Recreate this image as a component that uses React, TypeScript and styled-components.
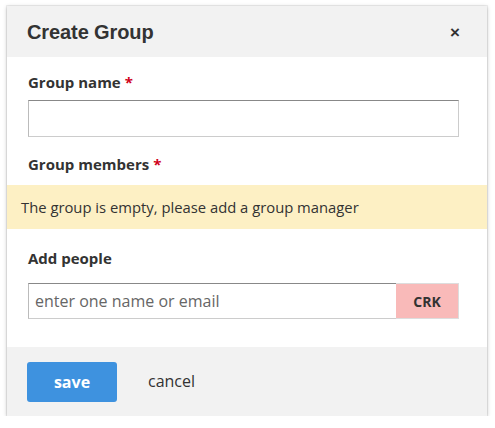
import React from "react";
import styled, { createGlobalStyle } from "styled-components";

const Global = createGlobalStyle`
  html, body { margin: 0; padding: 0; background: #ffffff; }
  body { font-family: "Open Sans", "Liberation Sans", sans-serif; color: #333; }
  * { box-sizing: border-box; }
`;

const Dialog = styled.div`
  margin: 6px 0 0 7px;
  width: 480px;
  background: #fff;
  box-shadow: 0 0 0 1px rgba(0, 0, 0, 0.06), 0 1px 4px rgba(0, 0, 0, 0.25);
  display: flex;
  flex-direction: column;
`;

const Header = styled.div`
  height: 51px;
  background: #f2f2f2;
  display: flex;
  align-items: center;
  justify-content: space-between;
  padding: 2px 27px 0 20px;
`;

const Title = styled.h2`
  margin: 0;
  font-family: "Liberation Sans", Arial, sans-serif;
  font-weight: 700;
  font-size: 20px;
  color: #333;
  letter-spacing: -0.1px;
`;

const Close = styled.button`
  border: 0;
  background: none;
  padding: 0;
  font-family: "Liberation Sans", Arial, sans-serif;
  font-weight: 700;
  font-size: 17px;
  line-height: 1;
  color: #333;
  cursor: pointer;
`;

const Body = styled.div`
  padding: 15px 0 28px;
  display: flex;
  flex-direction: column;
`;

const Section = styled.div<{ $top?: number }>`
  padding: 0 28px 0 21px;
  margin-top: ${(p) => p.$top ?? 0}px;
  display: flex;
  flex-direction: column;
`;

const Label = styled.label<{ $gap: number }>`
  font-weight: 700;
  font-size: 15px;
  line-height: 20px;
  color: #333;
  margin-bottom: ${(p) => p.$gap}px;
`;

const Req = styled.span`
  color: #d0021b;
  margin-left: 4px;
`;

const TextInput = styled.input`
  height: 37px;
  width: 100%;
  border: 1px solid #ccc;
  border-top-color: #888;
  border-left-color: #bbb;
  background: #fff;
  font-family: "Open Sans", sans-serif;
  font-size: 15px;
  padding: 0 6px;
  outline: none;
`;

const Alert = styled.div`
  margin-top: 11px;
  height: 44px;
  background: #fdf0c4;
  display: flex;
  align-items: center;
  padding: 0 14px;
  font-size: 14.8px;
  color: #333;
`;

const Row = styled.div`
  display: flex;
  height: 36px;
`;

const PeopleInput = styled.input`
  flex: 1;
  min-width: 0;
  border: 1px solid #ccc;
  border-right: 0;
  border-top-color: #888;
  border-left-color: #bbb;
  font-family: "Open Sans", sans-serif;
  font-size: 16px;
  padding: 0 6px;
  color: #333;
  outline: none;
  &::placeholder { color: #666; }
`;

const Tag = styled.button`
  width: 63px;
  border: 1px solid #ddd;
  border-left: 0;
  background: #f9bab9;
  font-family: "Open Sans", sans-serif;
  font-weight: 700;
  font-size: 14px;
  color: #333;
  padding: 0;
`;

const Footer = styled.div`
  background: #f2f2f2;
  height: 69px;
  padding: 15px 20px 0;
  display: flex;
  align-items: flex-start;
  gap: 31px;
`;

const Save = styled.button`
  width: 90px;
  height: 40px;
  border: 0;
  border-radius: 3px;
  background: #3e92df;
  color: #fff;
  font-family: "Open Sans", sans-serif;
  font-weight: 700;
  font-size: 16px;
  padding: 0;
`;

const Cancel = styled.button`
  border: 0;
  background: none;
  padding: 0;
  height: 38px;
  font-family: "Open Sans", sans-serif;
  font-size: 16px;
  color: #333;
`;

export default function App() {
  return (
    <>
      <Global />
      <Dialog>
        <Header>
          <Title>Create Group</Title>
          <Close aria-label="close">×</Close>
        </Header>
        <Body>
          <Section>
            <Label $gap={8}>
              Group name<Req>*</Req>
            </Label>
            <TextInput />
          </Section>
          <Section $top={17}>
            <Label $gap={0}>
              Group members<Req>*</Req>
            </Label>
          </Section>
          <Alert>The group is empty, please add a group manager</Alert>
          <Section $top={19}>
            <Label $gap={15}>Add people</Label>
            <Row>
              <PeopleInput placeholder="enter one name or email" />
              <Tag>CRK</Tag>
            </Row>
          </Section>
        </Body>
        <Footer>
          <Save>save</Save>
          <Cancel>cancel</Cancel>
        </Footer>
      </Dialog>
    </>
  );
}
